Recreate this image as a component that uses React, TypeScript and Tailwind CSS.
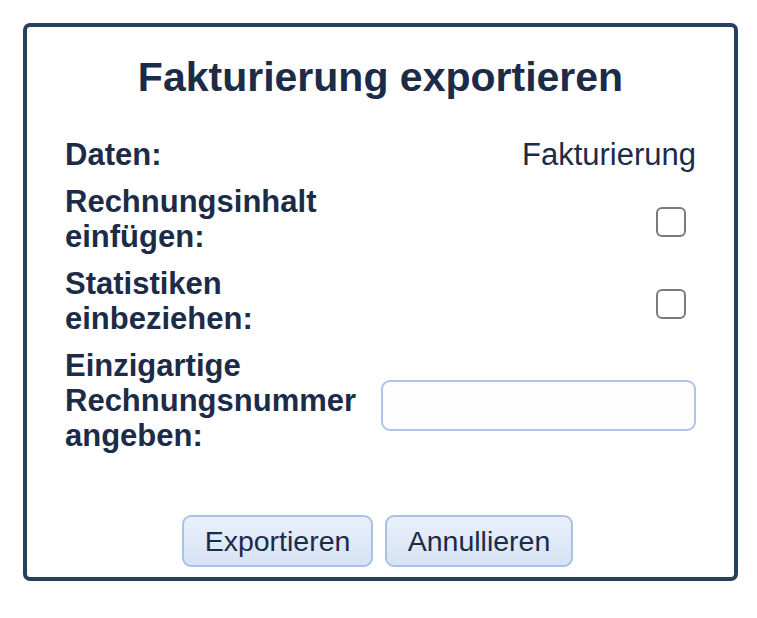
import { useState } from "react";

export default function App() {
  const [includeContent, setIncludeContent] = useState(false);
  const [includeStats, setIncludeStats] = useState(false);
  const [invoiceNo, setInvoiceNo] = useState("");

  return (
    <div className="min-h-screen bg-white p-[23px] font-['Liberation_Sans',Arial,sans-serif] text-[#1c2b47]">
      <div className="flex h-[558px] w-[715px] flex-col rounded-[7px] border-4 border-[#26405f] bg-white px-[38px] pt-[27px] pb-[10px]">
        <h1 className="text-center text-[41px] font-bold leading-[46px]">Fakturierung exportieren</h1>

        <div className="mt-[37px] grid grid-cols-2 gap-y-[12px] text-[31px] leading-[35px]">
          {/* Daten */}
          <div className="font-bold">Daten:</div>
          <div className="text-right">Fakturierung</div>

          {/* Rechnungsinhalt */}
          <div className="font-bold">Rechnungsinhalt einfügen:</div>
          <div className="flex items-center justify-end">
            <input
              type="checkbox"
              checked={includeContent}
              onChange={(e) => setIncludeContent(e.target.checked)}
              className="mt-[5px] mr-[10px] h-[30px] w-[30px] cursor-pointer appearance-none rounded-[6px] border-[2.5px] border-[#7a7a7a] bg-white"
            />
          </div>

          {/* Statistiken */}
          <div className="font-bold">Statistiken einbeziehen:</div>
          <div className="flex items-center justify-end">
            <input
              type="checkbox"
              checked={includeStats}
              onChange={(e) => setIncludeStats(e.target.checked)}
              className="mt-[5px] mr-[10px] h-[30px] w-[30px] cursor-pointer appearance-none rounded-[6px] border-[2.5px] border-[#7a7a7a] bg-white"
            />
          </div>

          {/* Rechnungsnummer */}
          <div className="pr-4 font-bold">Einzigartige Rechnungsnummer angeben:</div>
          <div className="flex items-center">
            <input
              type="text"
              value={invoiceNo}
              onChange={(e) => setInvoiceNo(e.target.value)}
              className="mt-[10px] h-[51px] w-full rounded-[9px] border-2 border-[#adc4e8] bg-[#fdfdfd] px-3 text-[26px] outline-none"
            />
          </div>
        </div>

        <div className="mt-auto flex justify-center gap-[12px] pr-[6px]">
          <button className="h-[52px] w-[191px] rounded-[9px] border-2 border-[#a9c1e5] bg-gradient-to-b from-[#e9f0fa] to-[#d6e3f4] text-[28.5px] leading-none text-[#1c2b47]">
            Exportieren
          </button>
          <button className="h-[52px] w-[188px] rounded-[9px] border-2 border-[#a9c1e5] bg-gradient-to-b from-[#e9f0fa] to-[#d6e3f4] text-[28.5px] leading-none text-[#1c2b47]">
            Annullieren
          </button>
        </div>
      </div>
    </div>
  );
}
